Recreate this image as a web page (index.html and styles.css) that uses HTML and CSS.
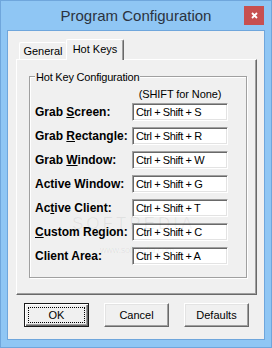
FILE: index.html
```html
<!DOCTYPE html>
<html lang="en">
<head>
    <meta charset="UTF-8">
    <title>Program Configuration</title>
    <link rel="stylesheet" href="styles.css">
</head>
<body>
    <div class="window">
        <div class="titlebar">
            <div class="title">Program Configuration</div>
            <div class="close">
                <svg width="7" height="7" viewBox="0 0 7 7"><path d="M1 1L6 6M6 1L1 6" stroke="#fff" stroke-width="1.8"/></svg>
            </div>
        </div>

        <div class="client">
            <div class="tabs">
                <div class="tab">General</div>
                <div class="tab active">Hot Keys</div>
            </div>

            <div class="panel">
                <div class="group">
                    <div class="group-title">Hot Key Configuration</div>
                    <div class="hint-row">
                        <span class="hint">(SHIFT for None)</span>
                    </div>
                    <div class="keys">
                        <label>Grab <u>S</u>creen:</label>
                        <input type="text" value="Ctrl + Shift + S" readonly>
                        <label>Grab <u>R</u>ectangle:</label>
                        <input type="text" value="Ctrl + Shift + R" readonly>
                        <label>Grab <u>W</u>indow:</label>
                        <input type="text" value="Ctrl + Shift + W" readonly>
                        <label>Active Window:</label>
                        <input type="text" value="Ctrl + Shift + G" readonly>
                        <label>Ac<u>t</u>ive Client:</label>
                        <input type="text" value="Ctrl + Shift + T" readonly>
                        <label><u>C</u>ustom Region:</label>
                        <input type="text" value="Ctrl + Shift + C" readonly>
                        <label>Client Area:</label>
                        <input type="text" value="Ctrl + Shift + A" readonly>
                    </div>
                    <div class="mark">SOFTPEDIA</div>
                    <div class="mark-url">www.softpedia.com</div>
                </div>
            </div>

            <div class="buttons">
                <button class="default"><span class="focus">OK</span></button>
                <button>Cancel</button>
                <button>Defaults</button>
            </div>
        </div>
    </div>
</body>
</html>
```

FILE: styles.css
```css
body {
    margin: 0;
    font-family: "Liberation Sans", Arial, sans-serif;
    font-size: 11px;
    color: #000;
}
.window {
    width: 272px;
    height: 348px;
    box-sizing: border-box;
    border: 1px solid #6fa6dc;
    background-color: #8fc6f4;
    padding: 0 6px 7px;
    display: flex;
    flex-direction: column;
}
.titlebar {
    height: 29px;
    display: grid;
    grid-template-columns: 1fr auto 1fr;
    align-items: start;
}
.title {
    grid-column: 2;
    font-size: 15px;
    line-height: 29px;
    color: #2b3340;
}
.close {
    grid-column: 3;
    justify-self: end;
    width: 20px;
    height: 19px;
    margin: 5px 1px 0 0;
    background-color: #c75050;
    display: flex;
    align-items: center;
    justify-content: center;
}
.close svg {
    display: block;
}
.client {
    height: 310px;
    box-sizing: border-box;
    border: 1px solid #6fa6dc;
    background-color: #f0f0f0;
    padding: 8px 7px 0 8px;
    display: flex;
    flex-direction: column;
}
.tabs {
    display: flex;
    align-items: flex-end;
    height: 20px;
    padding-left: 3px;
}
.tab {
    box-sizing: border-box;
    width: 47px;
    height: 17px;
    padding-top: 2px;
    line-height: 13px;
    text-align: center;
    border-top: 1px solid #fff;
    border-left: 1px solid #fff;
    border-radius: 2px 2px 0 0;
}
.tab.active {
    position: relative;
    z-index: 1;
    width: 58px;
    height: 21px;
    padding-top: 3px;
    margin-bottom: -1px;
    background-color: #f0f0f0;
    border-right: 1px solid #696969;
    box-shadow: inset -1px 0 0 #a0a0a0;
}
.panel {
    height: 236px;
    box-sizing: border-box;
    border: 1px solid #696969;
    border-top-color: #fff;
    border-left-color: #fff;
    box-shadow: inset -1px -1px 0 #a0a0a0;
    padding: 16px 0 0 12px;
}
.group {
    position: relative;
    width: 218px;
    height: 202px;
    box-sizing: border-box;
    border: 1px solid #a0a0a0;
    box-shadow: inset 1px 1px 0 #fff, 1px 1px 0 #fff;
    padding-left: 5px;
}
.group-title {
    display: table;
    margin: -6px 0 0 0;
    padding: 0 1px;
    line-height: 13px;
    letter-spacing: -0.2px;
    background-color: #f0f0f0;
}
.hint-row {
    margin: 4px 0 2px 97px;
    width: 96px;
    text-align: center;
    line-height: 13px;
}
.hint {
    letter-spacing: -0.1px;
}
.keys {
    display: grid;
    grid-template-columns: 97px 96px;
    row-gap: 6px;
}
.keys label {
    font-size: 12px;
    font-weight: bold;
    line-height: 18px;
    white-space: nowrap;
}
.keys input {
    width: 96px;
    height: 18px;
    box-sizing: border-box;
    margin: 0;
    padding: 0 0 0 3px;
    border: 1px solid #fff;
    border-top-color: #a0a0a0;
    border-left-color: #a0a0a0;
    box-shadow: inset 1px 1px 0 #696969, inset -1px -1px 0 #e3e3e3;
    background-color: #fff;
    font-family: "Liberation Sans", Arial, sans-serif;
    font-size: 11px;
    letter-spacing: -0.4px;
    color: #000;
    outline: none;
}
.mark {
    position: absolute;
    left: 42px;
    top: 138px;
    font-size: 17px;
    line-height: 17px;
    letter-spacing: 3px;
    color: rgba(0, 0, 0, 0.06);
}
.mark-url {
    position: absolute;
    left: 70px;
    top: 168px;
    font-size: 9px;
    line-height: 11px;
    letter-spacing: -0.2px;
    color: rgba(0, 0, 0, 0.07);
}
.buttons {
    display: flex;
    gap: 15px;
    margin: 8px 0 0 8px;
}
button {
    width: 65px;
    height: 24px;
    box-sizing: border-box;
    padding: 0;
    background-color: #f0f0f0;
    border: 1px solid #696969;
    border-top-color: #fff;
    border-left-color: #fff;
    box-shadow: inset -1px -1px 0 #a0a0a0, inset 1px 1px 0 #e3e3e3;
    font-family: "Liberation Sans", Arial, sans-serif;
    font-size: 11px;
    color: #000;
}
button.default {
    border: 1px solid #1a1a1a;
    box-shadow: inset 1px 1px 0 #fff, inset -1px -1px 0 #696969, inset -2px -2px 0 #a0a0a0;
    padding: 3px;
}
.focus {
    display: flex;
    align-items: center;
    justify-content: center;
    height: 100%;
    box-sizing: border-box;
    border: 1px dotted #000;
}
```
